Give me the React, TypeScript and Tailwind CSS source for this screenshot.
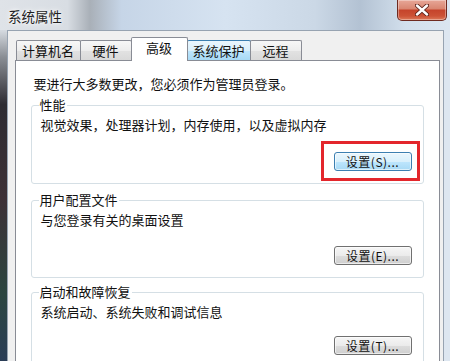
import React from 'react';

const FONT = '"Noto Sans CJK SC", "Liberation Sans", sans-serif';

type Tab = { label: string; width: string; state: 'normal' | 'active' | 'hover' };

const tabs: Tab[] = [
  { label: '计算机名', width: 'w-[65px]', state: 'normal' },
  { label: '硬件', width: 'w-[52px]', state: 'normal' },
  { label: '高级', width: 'w-[57px]', state: 'active' },
  { label: '系统保护', width: 'w-[64px]', state: 'hover' },
  { label: '远程', width: 'w-[52px]', state: 'normal' },
];

function TabButton({ tab }: { tab: Tab }) {
  if (tab.state === 'active') {
    return (
      <div
        className={`${tab.width} relative z-10 -mb-px -ml-px h-[24px] flex items-center justify-center pb-[3px] rounded-t-[2px] border border-b-0 border-[#898c95] bg-white text-[13px] text-[#111]`}
      >
        {tab.label}
      </div>
    );
  }
  const skin =
    tab.state === 'hover'
      ? 'border-[#3c7fb1] bg-[linear-gradient(180deg,#eaf6fd_0%,#d9f0fc_50%,#bee6fd_51%,#a7d9f5_100%)]'
      : 'border-[#898c95] bg-[linear-gradient(180deg,#f7f7f7_0%,#ededed_50%,#e2e2e2_51%,#d9d9d9_100%)]';
  return (
    <div
      className={`${tab.width} -ml-px first:ml-0 h-[20px] flex items-center justify-center pt-[1px] rounded-t-[2px] border border-b-0 ${skin} text-[13px] text-[#111]`}
    >
      {tab.label}
    </div>
  );
}

function SettingsButton({ label, focused }: { label: string; focused?: boolean }) {
  const skin = focused
    ? 'border-[#3c7fb1] bg-[linear-gradient(180deg,#eaf6fd_0%,#d9f0fc_50%,#bee6fd_51%,#a7d9f5_100%)]'
    : 'border-[#707070] bg-[linear-gradient(180deg,#f6f6f6_0%,#ebebeb_50%,#dddddd_51%,#cfcfcf_100%)]';
  return (
    <button
      className={`w-[78px] h-[19px] rounded-[3px] border ${skin} text-[12px] leading-none text-[#111] flex items-center justify-center tracking-[0.5px] shadow-[inset_0_0_0_1px_rgba(255,255,255,0.6)]`}
    >
      {label}
    </button>
  );
}

function GroupBox({
  title,
  desc,
  button,
  highlight,
  className = '',
  gap = 'mt-[19px]',
}: {
  title: string;
  desc: string;
  button: string;
  highlight?: boolean;
  className?: string;
  gap?: string;
}) {
  return (
    <fieldset className={`w-[393px] rounded-[3px] border border-[#d5dfe5] pb-[12px] ${className}`}>
      <legend className="ml-[7px] px-[1px] text-[13px] leading-[14px] text-[#111]">{title}</legend>
      <div className="mt-[5px] pl-[9px] text-[13px] leading-[16px] text-[#111]">{desc}</div>
      <div className={`${gap} flex justify-end pr-[11px]`}>
        <div className="relative">
          <SettingsButton label={button} focused={highlight} />
          {highlight && (
            <div className="absolute -left-[13px] -top-[11px] -right-[8px] -bottom-[10px] border-[3px] border-[#e3262c]" />
          )}
        </div>
      </div>
    </fieldset>
  );
}

export default function App() {
  return (
    <div
      className="w-[450px] h-[361px] overflow-hidden flex flex-col bg-[linear-gradient(90deg,#dfe3e8_0%,#d8dde3_15%,#a9b0b8_20%,#c6d5e7_27%,#d6e3f1_50%,#cbd8e6_70%,#b3c2d3_80%,#d2dfec_90%,#dbe5f0_100%)]"
      style={{ fontFamily: FONT }}
    >
      {/* Заголовок окна */}
      <div className="h-[30px] flex items-start justify-between shrink-0">
        <span className="pl-[8px] pt-[9px] text-[13.5px] leading-[14px] text-[#1f1f1f] [text-shadow:0_0_6px_#fff,0_0_3px_#fff]">
          系统属性
        </span>
        <div className="mr-[3px] w-[50px] h-[21px] rounded-b-[5px] border border-t-0 border-[#6e2a20] bg-[linear-gradient(180deg,#e7a798_0%,#d98570_45%,#c5432b_50%,#cc5236_80%,#dd7a5a_100%)] flex items-center justify-center shadow-[inset_0_0_0_1px_rgba(255,255,255,0.35)]">
          <svg width="14" height="12" viewBox="0 0 14 12">
            <path d="M2 1.5 L12 10.5 M12 1.5 L2 10.5" stroke="#5a2018" strokeWidth="4.2" strokeLinecap="round" />
            <path d="M2 1.5 L12 10.5 M12 1.5 L2 10.5" stroke="#fff" strokeWidth="2.4" strokeLinecap="round" />
          </svg>
        </div>
      </div>

      <div className="flex-1 flex">
        {/* Левая рамка (просвечивает рабочий стол) */}
        <div className="w-[8px] bg-[linear-gradient(180deg,#d6dbe1_0%,#8a8e94_8%,#2e2c32_22%,#3d3036_50%,#2c4640_78%,#2a3c58_100%)]" />

        {/* Клиентская область */}
        <div className="flex-1 flex flex-col bg-[#f0f0f0] border-l border-t border-r border-[#97a3b1]">
          <div className="flex items-end pt-[6px] pl-[8px]">
            {tabs.map((t) => (
              <TabButton key={t.label} tab={t} />
            ))}
          </div>

          <div className="flex-1 ml-[7px] mr-[3px] bg-white border border-b-0 border-[#898c95] pt-[15px] px-[15px]">
            <div className="pl-[3px] text-[13px] leading-[16px] text-[#111]">
              要进行大多数更改，您必须作为管理员登录。
            </div>
            <GroupBox
              className="mt-[6px]"
              title="性能"
              desc="视觉效果，处理器计划，内存使用，以及虚拟内存"
              button="设置(S)..."
              highlight
            />
            <GroupBox
              className="mt-[9px]"
              title="用户配置文件"
              desc="与您登录有关的桌面设置"
              button="设置(E)..."
              gap="mt-[18px]"
            />
            <GroupBox
              className="mt-[7px]"
              title="启动和故障恢复"
              desc="系统启动、系统失败和调试信息"
              button="设置(T)..."
              gap="mt-[16px]"
            />
          </div>
        </div>

        <div className="w-[8px] bg-[#dde6f0]" />
      </div>
    </div>
  );
}
